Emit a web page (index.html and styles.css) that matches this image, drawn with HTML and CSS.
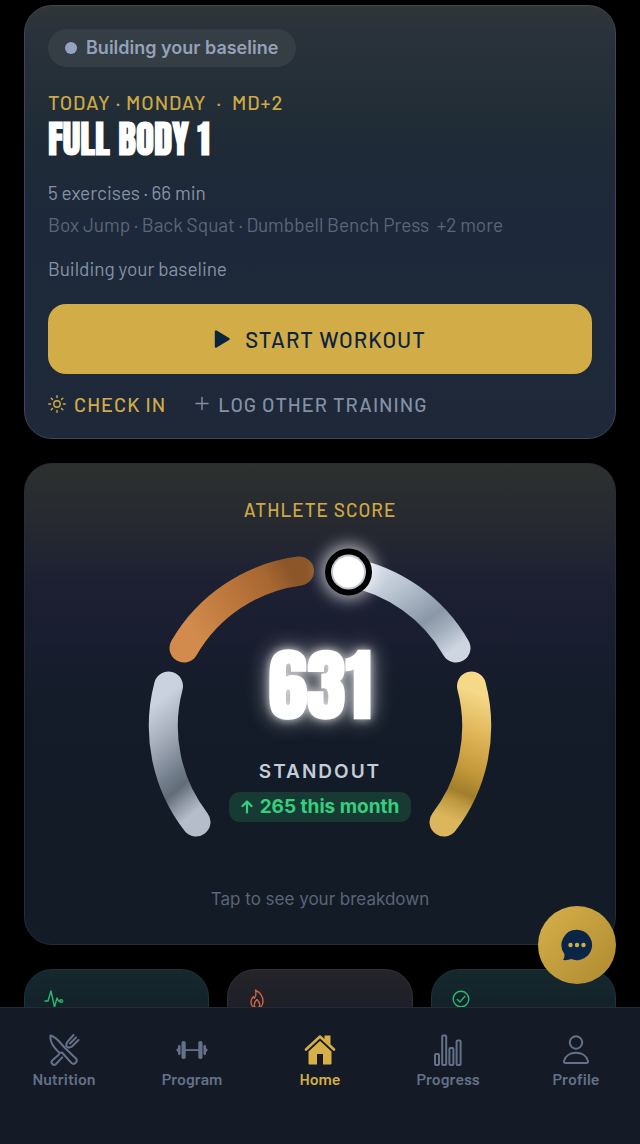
FILE: index.html
```html
<!DOCTYPE html>
<html lang="en">
<head>
  <meta charset="UTF-8">
  <meta name="viewport" content="width=device-width, initial-scale=1.0">
  <title>Home</title>
  <link rel="stylesheet" href="styles.css">
</head>
<body>
  <main class="content">
    <section class="card workout">
      <span class="status">Building your baseline</span>
      <p class="eyebrow workout-day">TODAY · MONDAY &nbsp;·&nbsp; MD+2</p>
      <h1 class="workout-title">FULL BODY 1</h1>
      <p class="workout-meta">5 exercises · 66 min</p>
      <p class="workout-list">Box Jump · Back Squat · Dumbbell Bench Press &nbsp;+2 more</p>
      <p class="workout-note">Building your baseline</p>
      <button class="start" type="button">
        <svg width="16" height="18" viewBox="0 0 16 18"><path d="M2 1.5v15L14.5 9z" fill="currentColor" stroke="currentColor" stroke-width="2.4" stroke-linejoin="round"/></svg>
        START WORKOUT
      </button>
      <div class="actions">
        <button class="action action-gold" type="button">
          <svg class="line" width="18" height="18" viewBox="0 0 18 18"><circle cx="9" cy="9" r="3.2"/><path d="M9 .8v1.800M9 15.400v1.800M.8 9h1.800M15.400 9h1.800M3.200 3.200l1.300 1.300M13.500 13.500l1.300 1.300M3.200 14.800l1.300-1.300M13.500 4.500l1.300-1.300"/></svg>
          CHECK IN
        </button>
        <button class="action" type="button">
          <svg class="line" width="16" height="18" viewBox="0 0 16 18"><path d="M8 2.500v12M2 8.500h12"/></svg>
          LOG OTHER TRAINING
        </button>
      </div>
    </section>

    <section class="card score">
      <h2 class="eyebrow score-label">ATHLETE SCORE</h2>
      <div class="gauge">
        <svg class="gauge-arc" width="360" height="320" viewBox="0 0 360 320">
          <defs>
            <linearGradient id="steel" x1="0.4" y1="0" x2="0.6" y2="1">
              <stop offset="0" stop-color="#cbd2df"/>
              <stop offset="0.3" stop-color="#a4acb9"/>
              <stop offset="0.62" stop-color="#707b89"/>
              <stop offset="0.74" stop-color="#626c79"/>
              <stop offset="0.86" stop-color="#8b94a1"/>
              <stop offset="1" stop-color="#b5bdca"/>
            </linearGradient>
            <linearGradient id="bronze" x1="0" y1="0.6" x2="1" y2="0.2">
              <stop offset="0" stop-color="#d28b4c"/>
              <stop offset="0.5" stop-color="#b9743a"/>
              <stop offset="0.8" stop-color="#a66730"/>
              <stop offset="1" stop-color="#8c5629"/>
            </linearGradient>
            <linearGradient id="silver" x1="0" y1="0" x2="1" y2="1">
              <stop offset="0" stop-color="#dde5ef"/>
              <stop offset="0.35" stop-color="#b8c3d0"/>
              <stop offset="0.68" stop-color="#8a97a6"/>
              <stop offset="0.82" stop-color="#a3aebc"/>
              <stop offset="1" stop-color="#cdd6e1"/>
            </linearGradient>
            <linearGradient id="gold" x1="0.5" y1="0" x2="0.4" y2="1">
              <stop offset="0" stop-color="#f5d888"/>
              <stop offset="0.3" stop-color="#dfb558"/>
              <stop offset="0.58" stop-color="#c3993a"/>
              <stop offset="0.77" stop-color="#a27e2b"/>
              <stop offset="0.86" stop-color="#c09a43"/>
              <stop offset="1" stop-color="#dcb65c"/>
            </linearGradient>
            <filter id="knobGlow" x="-100%" y="-100%" width="300%" height="300%">
              <feGaussianBlur stdDeviation="8"/>
            </filter>
          </defs>
          <g fill="none" stroke-width="29" stroke-linecap="round">
            <path d="M56 282A157 157 0 0 1 28.500 146" stroke="url(#steel)"/>
            <path d="M44 108A157 157 0 0 1 159.500 31" stroke="url(#bronze)"/>
            <path d="M208.500 32A157 157 0 0 1 316 108" stroke="url(#silver)"/>
            <path d="M331.500 146A157 157 0 0 1 304 282" stroke="url(#gold)"/>
          </g>
          <circle cx="208.500" cy="32" r="27" fill="#fff" opacity="0.65" filter="url(#knobGlow)"/>
          <circle cx="208.500" cy="32" r="23.500" fill="#000"/>
          <circle cx="208.500" cy="32" r="17.500" fill="#c3c7d3"/>
          <circle cx="208.500" cy="32" r="15.500" fill="#fff"/>
        </svg>
        <div class="gauge-text">
          <strong class="score-value">631</strong>
          <span class="score-tier">STANDOUT</span>
          <span class="score-trend">
            <svg width="12" height="14" viewBox="0 0 12 14"><path d="M6 12.500V1.800M1.500 6L6 1.500 10.500 6" fill="none" stroke="currentColor" stroke-width="2.200" stroke-linecap="round" stroke-linejoin="round"/></svg>
            265 this month
          </span>
        </div>
      </div>
      <p class="score-hint">Tap to see your breakdown</p>
    </section>

    <section class="tiles">
      <div class="card tile tile-green">
        <svg class="line" width="20" height="20" viewBox="0 0 20 20"><path d="M1 12h3l3-10 3.500 16 2.500-9 1.500 3H16"/><circle cx="17.200" cy="12" r="1.400"/></svg>
      </div>
      <div class="card tile tile-red">
        <svg class="line" width="20" height="20" viewBox="0 0 20 20"><path d="M8.500 1.200C13 3.500 16 7.500 16 12.500c0 4-2.500 6.500-6 6.500s-6-2.500-6-6c0-2.500 1.200-4 2.200-5.200l1.300 1.400C8.800 7 9.300 4 8.500 1.200z"/><path d="M10 10.500c1.800 1.800 2.800 3.200 2.800 5S11.600 19 10 19s-2.800-1.500-2.800-3.500 1-3.200 2.800-5z"/></svg>
      </div>
      <div class="card tile tile-green">
        <svg class="line" width="20" height="20" viewBox="0 0 20 20"><circle cx="10" cy="10" r="7.800"/><path d="M6.300 10.500l2.700 2.400 4.800-5.400"/></svg>
      </div>
    </section>
  </main>

  <button class="chat" type="button" aria-label="Chat">
    <svg width="32" height="32" viewBox="0 0 32 32"><path d="M16 .8a15.200 15.200 0 1 1-5.800 29.300c-2.300 1-5 1.300-8.200 1 1.200-1.700 1.700-3.500 1.300-6.300A15.200 15.200 0 0 1 16 .8z" fill="#0b2547"/><g fill="#d2ac47"><circle cx="9.500" cy="16" r="2.200"/><circle cx="16" cy="16" r="2.200"/><circle cx="22.500" cy="16" r="2.200"/></g></svg>
  </button>

  <nav class="tabs">
    <a class="tab" href="#nutrition">
      <svg class="line" width="32" height="32" viewBox="0 0 32 32"><path d="M2.500 1.500c4 1.200 7.500 4.500 10.500 8l4 4.500 11 10.500a3.200 3.200 0 0 1-4.500 4.500L14 18.500l-2.500.5C6 14 1.500 8 2.500 1.500z"/><path d="M11 20.500l-6.800 6a2.600 2.600 0 0 0 3.600 3.700l6.400-6.800M18.500 12.500c-.6-2.500.2-4 1.500-5.300L25.500 1M30.500 6l-6 6c-1.400 1.300-3 1.800-5 1.200M28 3.500l-6 6"/></svg>
      Nutrition
    </a>
    <a class="tab" href="#program">
      <svg width="32" height="32" viewBox="0 0 32 32"><g fill="currentColor"><rect x="5.500" y="7" width="4.200" height="18" rx="1.800"/><rect x="22.300" y="7" width="4.200" height="18" rx="1.800"/><rect x="2" y="11" width="2.600" height="10" rx="1.300"/><rect x="27.400" y="11" width="2.600" height="10" rx="1.300"/><rect x="9" y="15.200" width="14" height="1.800"/><rect x=".5" y="14.500" width="2" height="3" rx="1"/><rect x="29.500" y="14.500" width="2" height="3" rx="1"/></g></svg>
      Program
    </a>
    <a class="tab tab-active" href="#home" aria-current="page">
      <svg width="32" height="32" viewBox="0 0 32 32"><g fill="currentColor"><path d="M16 6.200L27.500 17v12.500a1 1 0 0 1-1 1H19V20h-6v10.500H5.500a1 1 0 0 1-1-1V17z"/><path d="M20.500 3.500v-2h6v9l-6-5z"/></g><path d="M3 16.500L16 4.500l13 12" fill="none" stroke="#141b26" stroke-width="3.400"/><path d="M2 15.500L16 2.500l14 13" fill="none" stroke="currentColor" stroke-width="2.600" stroke-linecap="round" stroke-linejoin="round"/></svg>
      Home
    </a>
    <a class="tab" href="#progress">
      <svg class="line" width="32" height="32" viewBox="0 0 32 32"><rect x="3" y="20" width="4" height="11" rx="1"/><rect x="10.200" y="1.500" width="4" height="29.500" rx="1"/><rect x="17.400" y="14" width="4" height="17" rx="1"/><rect x="24.600" y="6.500" width="4" height="24.500" rx="1"/></svg>
      Progress
    </a>
    <a class="tab" href="#profile">
      <svg class="line" width="32" height="32" viewBox="0 0 32 32"><circle cx="16" cy="8.500" r="6.200"/><path d="M5.500 29c-1.200 0-1.800-.8-1.500-2 1.500-5.200 6.500-8.200 12-8.200s10.500 3 12 8.200c.3 1.200-.3 2-1.500 2z"/></svg>
      Profile
    </a>
  </nav>
</body>
</html>
```
FILE: styles.css
```css
* {
  box-sizing: border-box;
}
body {
  display: flex;
  flex-direction: column;
  position: relative;
  height: 100vh;
  margin: 0;
  overflow: hidden;
  background-color: #000;
  font-family: Barlow, Roboto, "Liberation Sans", sans-serif;
  font-size: 19px;
  line-height: 24px;
  color: #8592a5;
}
h1, h2, p {
  margin: 0;
}
button {
  padding: 0;
  border: 0;
  background: none;
  color: inherit;
  font: inherit;
  cursor: pointer;
}
svg {
  display: block;
  flex: none;
}
.line {
  fill: none;
  stroke: currentColor;
  stroke-width: 1.4;
  stroke-linecap: round;
  stroke-linejoin: round;
}

.content {
  flex: 1;
  min-height: 0;
  display: flex;
  flex-direction: column;
  gap: 24px;
  padding: 5px 24px 24px;
  overflow-y: auto;
  scrollbar-width: none;
}
.card {
  flex: none;
  border: 1px solid #252d36;
  border-radius: 28px;
}
.eyebrow {
  color: #cda946;
  font-size: 19px;
  font-weight: 500;
  letter-spacing: 1px;
}

/* today's workout */
.workout {
  display: flex;
  flex-direction: column;
  align-items: flex-start;
  padding: 23px 23px 22px;
  border: 1px solid #3e4754;
  background: linear-gradient(#303637 0, #29313a 30px, #242f37 80px, #1e2a36 140px, #1d293a 220px, #1e2838 100%);
}
.status {
  display: flex;
  align-items: center;
  gap: 9px;
  height: 38px;
  padding: 0 18px 0 17px;
  border-radius: 19px;
  background-color: #353d45;
  color: #94a1b9;
  font-family: Inter, "Liberation Sans", sans-serif;
  font-size: 18px;
  font-weight: 600;
}
.status::before {
  content: "";
  width: 12px;
  height: 12px;
  border-radius: 50%;
  background-color: #94a3bf;
}
.workout-day {
  margin-top: 23px;
  font-size: 20px;
}
.workout-title {
  margin-top: 1px;
  color: #fff;
  font-family: Anton, "Roboto Condensed", Roboto, sans-serif;
  font-size: 37px;
  font-weight: 700;
  line-height: 48px;
}
.workout-meta {
  margin-top: 18px;
}
.workout-list {
  margin-top: 8px;
  color: #5a6678;
}
.workout-note {
  margin-top: 20px;
}
.start {
  display: flex;
  align-items: center;
  justify-content: center;
  align-self: stretch;
  gap: 15px;
  height: 70px;
  margin-top: 23px;
  border-radius: 18px;
  background-color: #d2ac47;
  color: #0b2540;
  font-size: 22px;
  font-weight: 500;
  letter-spacing: 1px;
}
.actions {
  display: flex;
  gap: 28px;
  margin-top: 18px;
}
.action {
  display: flex;
  align-items: center;
  gap: 8px;
  color: #8491a5;
  font-size: 20px;
  font-weight: 500;
  letter-spacing: 1px;
}
.action-gold {
  color: #d2ac47;
}

/* athlete score */
.score {
  display: flex;
  flex-direction: column;
  align-items: center;
  padding: 34px 23px 33px;
  background: linear-gradient(#2d302e 0, #262930 60px, #1d2033 120px, #1a1e31 160px, #151c2a 220px, #121b27 280px, #131b26 100%);
}
.gauge {
  display: grid;
  margin-top: 18px;
}
.gauge-arc,
.gauge-text {
  grid-area: 1 / 1;
}
.gauge-arc {
  overflow: visible;
}
.gauge-text {
  display: flex;
  flex-direction: column;
  align-items: center;
  padding-top: 97px;
}
.score-value {
  color: #fff;
  font-family: Anton, "Roboto Condensed", Roboto, sans-serif;
  font-size: 78px;
  font-weight: 700;
  line-height: 96px;
  text-shadow: 0 0 8px rgba(255, 255, 255, 0.7), 0 0 22px rgba(255, 255, 255, 0.6);
}
.score-tier {
  margin-top: 27px;
  color: #c3ccd9;
  font-family: Inter, "Liberation Sans", sans-serif;
  font-weight: 600;
  letter-spacing: 2px;
}
.score-trend {
  display: flex;
  align-items: center;
  gap: 7px;
  height: 30px;
  margin-top: 8px;
  padding: 0 12px;
  border-radius: 11px;
  background-color: #183a35;
  color: #36cf7c;
  font-family: Inter, "Liberation Sans", sans-serif;
  font-weight: 700;
}
.score-hint {
  margin-top: 27px;
  color: #596578;
  font-family: Inter, "Liberation Sans", sans-serif;
  font-size: 17px;
}

/* summary tiles */
.tiles {
  flex: none;
  display: grid;
  grid-template-columns: repeat(3, 1fr);
  gap: 18px;
}
.tile {
  min-height: 150px;
  padding: 19px;
}
.tile-green {
  border-color: #1e3437;
  background: linear-gradient(#15292d, #121c27 60px);
  color: #2bb871;
}
.tile-red {
  border-color: #302f34;
  background: linear-gradient(#252429, #191b27 60px);
  color: #cf6540;
}

.chat {
  display: flex;
  align-items: center;
  justify-content: center;
  position: absolute;
  right: 24px;
  bottom: 160px;
  width: 78px;
  height: 78px;
  border-radius: 50%;
  background: linear-gradient(135deg, #d6b04a, #af8a30);
}

/* bottom tab bar */
.tabs {
  flex: none;
  display: grid;
  grid-template-columns: repeat(5, 1fr);
  height: 137px;
  padding-top: 26px;
  border-top: 1px solid #222b38;
  background-color: #141b26;
}
.tab {
  display: flex;
  flex-direction: column;
  align-items: center;
  gap: 1px;
  color: #647189;
  font-size: 16px;
  font-weight: 600;
  text-decoration: none;
}
.tab .line {
  stroke-width: 2;
}
.tab-active {
  color: #d6b047;
}
```
